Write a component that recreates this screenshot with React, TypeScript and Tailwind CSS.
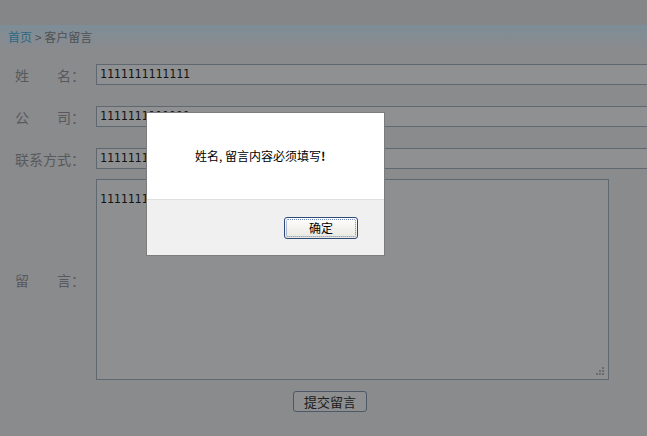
import React from 'react';

const FONT = { fontFamily: '"Noto Sans CJK SC", "Noto Sans", sans-serif' };
const MONO = { fontFamily: '"DejaVu Sans Mono", "Liberation Mono", monospace' };

const ONES = '1111111111111';

function Label({ chars }: { chars: string[] }) {
  return (
    <div className="w-[81px] shrink-0 flex text-[14px] text-[#58595c] leading-none">
      <div className="w-[56px] flex justify-between">
        {chars.map((c, i) => (
          <span key={i}>{c}</span>
        ))}
      </div>
      <span>：</span>
    </div>
  );
}

function TextRow({ chars, value }: { chars: string[]; value: string }) {
  return (
    <div className="flex items-center h-[21px]">
      <Label chars={chars} />
      <div className="w-[600px] shrink-0 h-[21px] border border-[#5f6870] bg-[#8f9092] flex items-center pl-[3px]">
        <span style={MONO} className="text-[11.5px] text-[#141414] leading-none">
          {value}
        </span>
      </div>
    </div>
  );
}

export default function App() {
  return (
    <div style={FONT} className="relative w-[647px] h-[436px] overflow-hidden bg-[#8a8b8d]">
      <div className="h-[25px] bg-[#858688]" />
      <div className="h-[23px] bg-gradient-to-b from-[#7d8d97] to-[#898b8e] flex items-center pl-[8px] text-[12px] leading-none">
        <span className="text-[#2c6884]">首页</span>
        <span className="text-[#4e5053] ml-[3px]">&gt; 客户留言</span>
      </div>

      <div className="pl-[15px] pt-[16px]">
        <TextRow chars={['姓', '名']} value={ONES} />
        <div className="mt-[21px]">
          <TextRow chars={['公', '司']} value={ONES} />
        </div>
        <div className="mt-[21px]">
          <TextRow chars={['联', '系', '方', '式']} value={ONES} />
        </div>

        <div className="mt-[10px] flex items-center">
          <Label chars={['留', '言']} />
          <div className="relative w-[513px] h-[201px] border border-[#5f6870] bg-[#8e8f91] pl-[3px] pt-[4px]">
            <span style={MONO} className="text-[11.5px] text-[#141414] leading-none">
              {ONES}
            </span>
            <svg className="absolute right-[3px] bottom-[3px]" width="10" height="10" viewBox="0 0 10 10">
              <rect x="7" y="1" width="2" height="2" fill="#6a6b6d" />
              <rect x="4" y="4" width="2" height="2" fill="#6a6b6d" />
              <rect x="7" y="4" width="2" height="2" fill="#6a6b6d" />
              <rect x="1" y="7" width="2" height="2" fill="#6a6b6d" />
              <rect x="4" y="7" width="2" height="2" fill="#6a6b6d" />
              <rect x="7" y="7" width="2" height="2" fill="#6a6b6d" />
            </svg>
          </div>
        </div>

        <div className="mt-[11px] ml-[278px]">
          <button className="w-[74px] h-[21px] border border-[#4d5966] rounded-[3px] bg-[#8e8f91] text-[13px] text-[#202020] leading-none flex items-center justify-center">
            提交留言
          </button>
        </div>
      </div>

      {/* alert dialog */}
      <div className="absolute left-[146px] top-[112px] w-[239px] h-[144px] border border-[#7b7c7e] flex flex-col bg-[#f0f0f0]">
        <div className="h-[87px] bg-white flex items-center pl-[48px] border-b border-[#dfdfdf]">
          <span className="text-[12px] text-black leading-none">姓名, 留言内容必须填写<b>!</b></span>
        </div>
        <div className="flex-1 pt-[14px] pl-[137px]">
          <button className="w-[74px] h-[22px] rounded-[3px] border border-[#2d4a78] bg-gradient-to-b from-white to-[#e8e6df] p-[1px]">
            <div className="w-full h-full border border-dotted border-[#6f86b8] rounded-[2px] flex items-center justify-center text-[12px] text-black leading-none">
              确定
            </div>
          </button>
        </div>
      </div>
    </div>
  );
}
